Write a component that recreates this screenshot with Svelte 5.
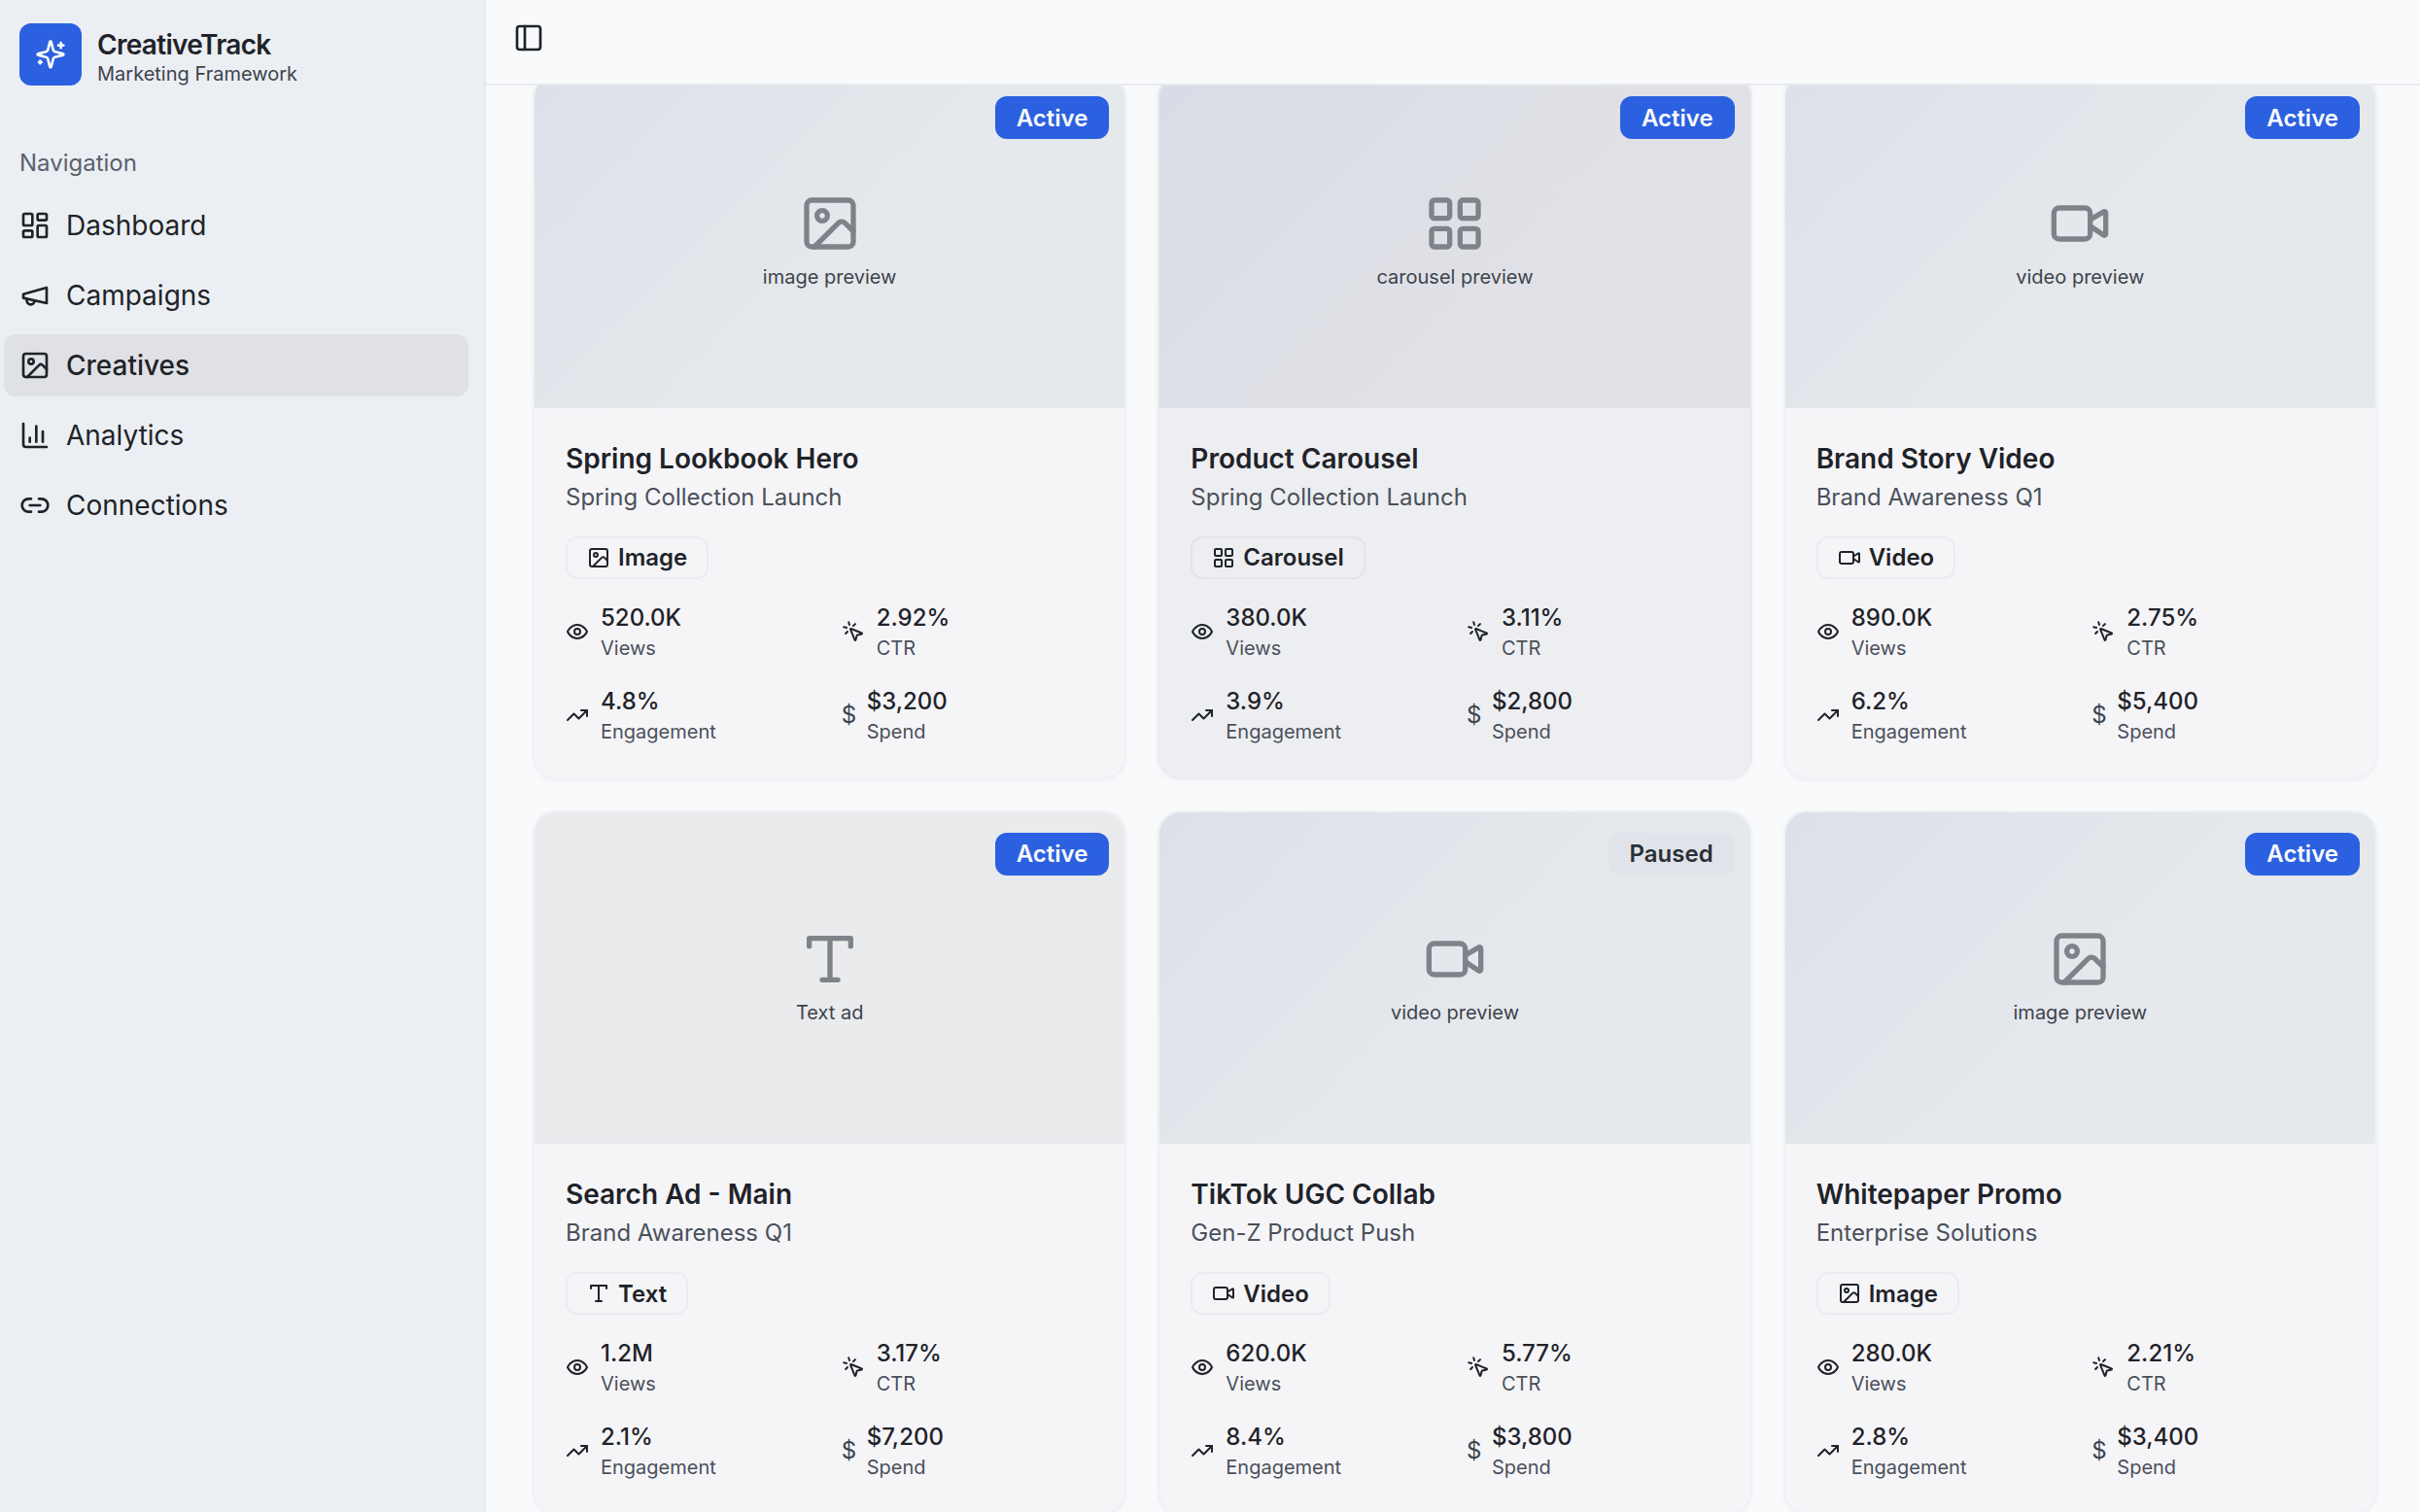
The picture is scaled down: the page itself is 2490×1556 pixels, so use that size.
<script>
  const nav = [
    { label: 'Dashboard', icon: 'dashboard' },
    { label: 'Campaigns', icon: 'megaphone' },
    { label: 'Creatives', icon: 'image', active: true },
    { label: 'Analytics', icon: 'chart' },
    { label: 'Connections', icon: 'link' }
  ]

  const typeLabels = { image: 'Image', carousel: 'Carousel', video: 'Video', text: 'Text' }

  const creatives = [
    { title: 'Spring Lookbook Hero', campaign: 'Spring Collection Launch', type: 'image', views: '520.0K', ctr: '2.92%', engagement: '4.8%', spend: '$3,200', status: 'Active' },
    { title: 'Product Carousel', campaign: 'Spring Collection Launch', type: 'carousel', views: '380.0K', ctr: '3.11%', engagement: '3.9%', spend: '$2,800', status: 'Active', hover: true },
    { title: 'Brand Story Video', campaign: 'Brand Awareness Q1', type: 'video', views: '890.0K', ctr: '2.75%', engagement: '6.2%', spend: '$5,400', status: 'Active' },
    { title: 'Search Ad - Main', campaign: 'Brand Awareness Q1', type: 'text', views: '1.2M', ctr: '3.17%', engagement: '2.1%', spend: '$7,200', status: 'Active' },
    { title: 'TikTok UGC Collab', campaign: 'Gen-Z Product Push', type: 'video', views: '620.0K', ctr: '5.77%', engagement: '8.4%', spend: '$3,800', status: 'Paused' },
    { title: 'Whitepaper Promo', campaign: 'Enterprise Solutions', type: 'image', views: '280.0K', ctr: '2.21%', engagement: '2.8%', spend: '$3,400', status: 'Active' }
  ]
</script>

{#snippet icon(name, size = 24, width = 2)}
  <svg class="icon" style="width:{size}px;height:{size}px" viewBox="0 0 24 24" fill="none" stroke="currentColor" stroke-width={width} stroke-linecap="round" stroke-linejoin="round">
    {#if name === 'dashboard'}
      <rect x="3" y="3" width="7" height="9" rx="1" /><rect x="14" y="3" width="7" height="5" rx="1" /><rect x="14" y="12" width="7" height="9" rx="1" /><rect x="3" y="16" width="7" height="5" rx="1" />
    {:else if name === 'megaphone'}
      <path d="m3 11 18-5v12L3 14v-3z" /><path d="M11.6 16.8a3 3 0 1 1-5.8-1.6" />
    {:else if name === 'image'}
      <rect x="3" y="3" width="18" height="18" rx="2" /><circle cx="9" cy="9" r="2" /><path d="m21 15-3.086-3.086a2 2 0 0 0-2.828 0L6 21" />
    {:else if name === 'chart'}
      <path d="M3 3v16a2 2 0 0 0 2 2h16" /><path d="M18 17V9" /><path d="M13 17V5" /><path d="M8 17v-3" />
    {:else if name === 'link'}
      <path d="M9 17H7A5 5 0 0 1 7 7h2" /><path d="M15 7h2a5 5 0 1 1 0 10h-2" /><line x1="8" x2="16" y1="12" y2="12" />
    {:else if name === 'panel'}
      <rect x="3" y="3" width="18" height="18" rx="2" /><path d="M9 3v18" />
    {:else if name === 'sparkles'}
      <path d="M9.937 15.5A2 2 0 0 0 8.5 14.063l-6.135-1.582a.5.5 0 0 1 0-.962L8.5 9.936A2 2 0 0 0 9.937 8.5l1.582-6.135a.5.5 0 0 1 .963 0L14.063 8.5A2 2 0 0 0 15.5 9.937l6.135 1.581a.5.5 0 0 1 0 .964L15.5 14.063a2 2 0 0 0-1.437 1.437l-1.582 6.135a.5.5 0 0 1-.963 0z" /><path d="M20 3v4" /><path d="M22 5h-4" /><path d="M4 17v2" /><path d="M5 18H3" />
    {:else if name === 'carousel'}
      <rect x="3" y="3" width="7" height="7" rx="1" /><rect x="14" y="3" width="7" height="7" rx="1" /><rect x="14" y="14" width="7" height="7" rx="1" /><rect x="3" y="14" width="7" height="7" rx="1" />
    {:else if name === 'video'}
      <path d="m16 13 5.223 3.482a.5.5 0 0 0 .777-.416V7.87a.5.5 0 0 0-.752-.432L16 10.5" /><rect x="2" y="6" width="14" height="12" rx="2" />
    {:else if name === 'text'}
      <polyline points="4 7 4 4 20 4 20 7" /><line x1="9" x2="15" y1="20" y2="20" /><line x1="12" x2="12" y1="4" y2="20" />
    {:else if name === 'eye'}
      <path d="M2 12s3-7 10-7 10 7 10 7-3 7-10 7-10-7-10-7Z" /><circle cx="12" cy="12" r="3" />
    {:else if name === 'pointer'}
      <path d="M14 4.1 12 6" /><path d="m5.1 8-2.9-.8" /><path d="m6 12-1.9 2" /><path d="M7.2 2.2 8 5.1" /><path d="M9.037 9.69a.498.498 0 0 1 .653-.653l11 4.5a.5.5 0 0 1-.074.949l-4.349 1.041a1 1 0 0 0-.74.739l-1.04 4.35a.5.5 0 0 1-.95.074z" />
    {:else if name === 'trending'}
      <polyline points="22 7 13.5 15.5 8.5 10.5 2 17" /><polyline points="16 7 22 7 22 13" />
    {/if}
  </svg>
{/snippet}

{#snippet metric(name, value, label)}
  <div class="metric">
    {#if name === 'dollar'}
      <span class="dollar">$</span>
    {:else}
      {@render icon(name)}
    {/if}
    <div>
      <div class="value">{value}</div>
      <div class="label">{label}</div>
    </div>
  </div>
{/snippet}

<div class="layout">
  <aside class="sidebar">
    <div class="brand">
      <div class="logo">{@render icon('sparkles', 32)}</div>
      <div>
        <div class="brand-name">CreativeTrack</div>
        <div class="brand-sub">Marketing Framework</div>
      </div>
    </div>
    <div class="nav-title">Navigation</div>
    <nav>
      {#each nav as item}
        <div class="nav-item" class:active={item.active}>
          {@render icon(item.icon, 32, 2)}
          <span>{item.label}</span>
        </div>
      {/each}
    </nav>
  </aside>

  <main>
    <header>
      {@render icon('panel', 32, 2)}
    </header>
    <div class="scroll">
      <div class="grid">
        {#each creatives as c}
          <article class="card" class:hover={c.hover}>
            <div class="preview {c.type}">
              <span class="status" class:paused={c.status === 'Paused'}>{c.status}</span>
              <div class="preview-icon">{@render icon(c.type, 64, 2)}</div>
              <div class="preview-text">{c.type === 'text' ? 'Text ad' : c.type + ' preview'}</div>
            </div>
            <div class="body">
              <h3>{c.title}</h3>
              <p>{c.campaign}</p>
              <div class="type-badge">
                {@render icon(c.type)}
                {typeLabels[c.type]}
              </div>
              <div class="metrics">
                {@render metric('eye', c.views, 'Views')}
                {@render metric('pointer', c.ctr, 'CTR')}
                {@render metric('trending', c.engagement, 'Engagement')}
                {@render metric('dollar', c.spend, 'Spend')}
              </div>
            </div>
          </article>
        {/each}
      </div>
    </div>
  </main>
</div>

<style>
  :global(body) {
    margin: 0;
    background: #f9fafc;
    font-family: Inter, "Noto Sans", sans-serif;
    color: #1f2329;
  }

  .layout {
    display: flex;
    height: 1556px;
    overflow: hidden;
  }

  .icon {
    display: block;
    flex-shrink: 0;
  }

  .sidebar {
    width: 500px;
    box-sizing: border-box;
    flex-shrink: 0;
    background: #ebeff3;
    border-right: 2px solid #e5e8ed;
  }

  .brand {
    display: flex;
    align-items: center;
    gap: 16px;
    padding: 24px 20px 0;
  }

  .logo {
    width: 64px;
    height: 64px;
    border-radius: 12px;
    background: #2b60e0;
    color: #f9fafc;
    display: flex;
    align-items: center;
    justify-content: center;
  }

  .brand-name {
    font-size: 28px;
    line-height: 36px;
    font-weight: 600;
    letter-spacing: -0.025em;
    margin-top: 3px;
  }

  .brand-sub {
    font-size: 20px;
    line-height: 24px;
    color: #3d434d;
  }

  .nav-title {
    margin: 64px 0 0 20px;
    font-size: 24px;
    line-height: 32px;
    color: #5a616d;
  }

  nav {
    margin: 16px 16px 0 4px;
    display: flex;
    flex-direction: column;
    gap: 8px;
  }

  .nav-item {
    height: 64px;
    display: flex;
    align-items: center;
    gap: 16px;
    padding: 0 16px;
    border-radius: 12px;
    font-size: 28px;
  }

  .nav-item.active {
    background: #e0e1e6;
    font-weight: 500;
  }

  main {
    flex: 1;
    min-width: 0;
    display: flex;
    flex-direction: column;
  }

  header {
    height: 88px;
    flex-shrink: 0;
    box-sizing: border-box;
    padding: 23px 0 0 28px;
    border-bottom: 2px solid #e8eaee;
    background: #f9fafc;
    position: relative;
    z-index: 1;
    color: #1f2329;
  }

  .scroll {
    flex: 1;
    min-height: 0;
    overflow: hidden;
    padding: 0 44px 0 48px;
  }

  .grid {
    display: grid;
    grid-template-columns: repeat(3, 1fr);
    gap: 32px;
    margin-top: -12px;
  }

  .card {
    border: 2px solid #eff1f4;
    border-radius: 24px;
    background: #f5f5f8;
    overflow: hidden;
    box-shadow: 0 2px 4px rgba(0, 0, 0, 0.04);
  }

  .card.hover {
    background: #edeef1;
    border-color: #e9ebee;
    box-shadow: 0 2px 6px rgba(0, 0, 0, 0.04);
  }

  .preview {
    aspect-ratio: 16 / 9;
    box-sizing: border-box;
    padding-top: 1px;
    position: relative;
    display: flex;
    flex-direction: column;
    align-items: center;
    justify-content: center;
    background: linear-gradient(135deg, #dce0e9, #e6e9ec 60%);
  }

  .preview.text {
    background: #e9ebed;
  }

  .card.hover .preview {
    background: linear-gradient(135deg, #d8dce6, #e0e1e6 60%);
  }

  .status {
    position: absolute;
    top: 21px;
    right: 16px;
    height: 44px;
    box-sizing: border-box;
    padding: 0 22px;
    display: flex;
    align-items: center;
    border-radius: 12px;
    background: #2b60e0;
    color: #f9fafc;
    font-size: 24px;
    font-weight: 600;
  }

  .status.paused {
    background: #e0e3ea;
    color: #2a2f37;
  }

  .preview-icon {
    color: #7f8288;
  }

  .preview-text {
    margin-top: 7px;
    font-size: 20px;
    line-height: 32px;
    color: #3d434d;
  }

  .body {
    padding: 32px;
  }

  h3 {
    margin: 0;
    font-size: 28px;
    line-height: 40px;
    font-weight: 600;
  }

  p {
    margin: 0;
    font-size: 24px;
    line-height: 40px;
    color: #4a505a;
  }

  .type-badge {
    display: inline-flex;
    align-items: center;
    gap: 8px;
    height: 44px;
    box-sizing: border-box;
    margin-top: 20px;
    padding: 0 20px;
    border: 2px solid #eaecef;
    border-radius: 12px;
    font-size: 24px;
    font-weight: 600;
    vertical-align: top;
  }

  .card.hover .type-badge {
    border-color: #e2e4e8;
  }

  .metrics {
    display: grid;
    grid-template-columns: 1fr 1fr;
    column-gap: 24px;
    row-gap: 22px;
    margin-top: 22px;
  }

  .metric {
    display: flex;
    align-items: center;
    gap: 12px;
  }

  .dollar {
    width: 14px;
    font-size: 24px;
    line-height: 1;
    flex-shrink: 0;
    color: #3d434d;
  }

  .value {
    font-size: 24px;
    line-height: 35px;
    font-weight: 500;
  }

  .label {
    font-size: 20px;
    line-height: 28px;
    padding-bottom: 1px;
    color: #4a505a;
  }
</style>
